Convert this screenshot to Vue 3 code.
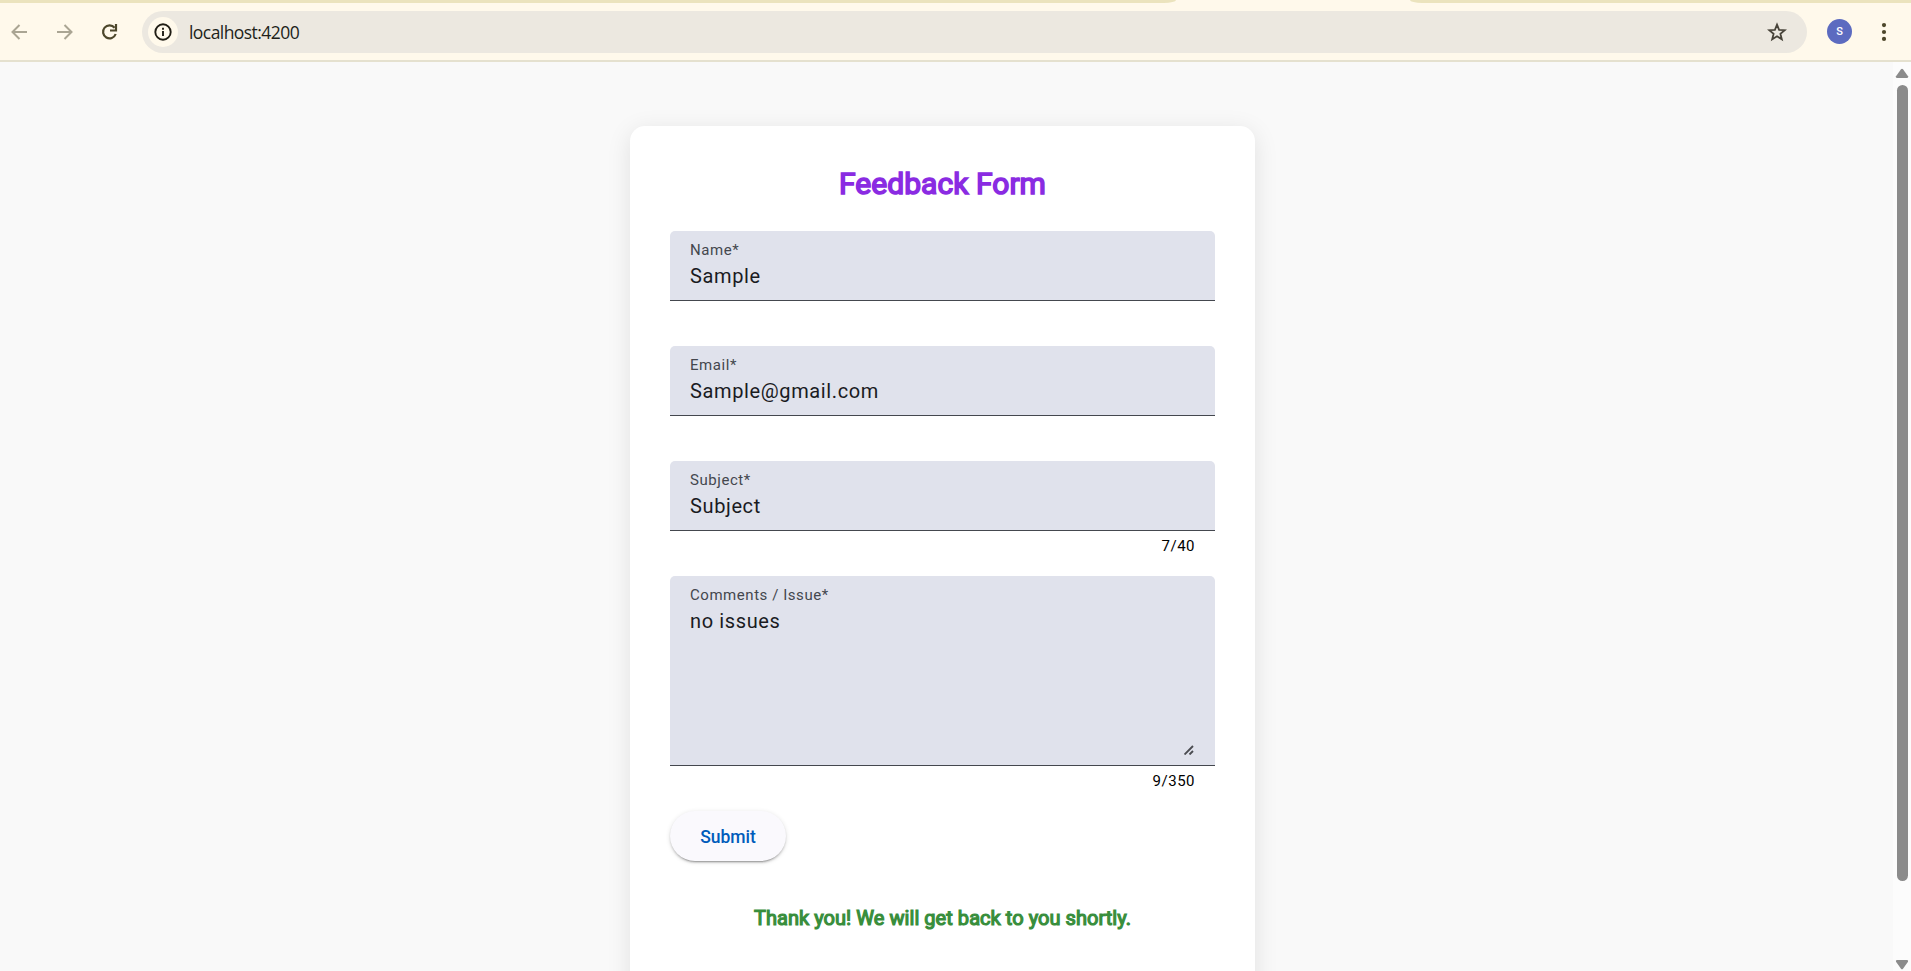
<script setup>
const fields = [
  { id: 'name', label: 'Name*', value: 'Sample', counter: '' },
  { id: 'email', label: 'Email*', value: 'Sample@gmail.com', counter: '' },
  { id: 'subject', label: 'Subject*', value: 'Subject', counter: '7/40' },
  { id: 'comments', label: 'Comments / Issue*', value: 'no issues', counter: '9/350', multiline: true },
]
</script>

<template>
  <div class="window">
    <header class="browser">
      <div class="tab-strip">
        <span class="strip-left"></span>
        <span class="strip-right"></span>
      </div>
      <div class="toolbar">
        <div class="nav">
          <svg width="18" height="18" viewBox="0 0 18 18" class="dim"><path d="M16 9H2M8.500 2L1.500 9l7 7" /></svg>
          <svg width="18" height="18" viewBox="0 0 18 18" class="dim"><path d="M1 9h14M8.500 2l7 7-7 7" /></svg>
          <svg width="18" height="18" viewBox="0 0 18 18" class="reload"><path d="M13.600 4.700A6.500 6.500 0 1 0 14.700 11" /><path d="M15 1v6.500H9" /></svg>
        </div>
        <div class="address">
          <span class="info">
            <svg width="18" height="18" viewBox="0 0 18 18"><circle cx="9" cy="9" r="7.700" /><path d="M9 8v5M9 4.700v2" /></svg>
          </span>
          <span class="url">localhost:4200</span>
          <svg class="star" width="20" height="20" viewBox="0 0 20 20"><path d="M10 2.600l2.100 5.200 5.600.4-4.300 3.600 1.400 5.500-4.800-3-4.800 3 1.400-5.500-4.300-3.600 5.600-.4z" /></svg>
        </div>
        <span class="avatar">S</span>
        <svg class="dots" width="6" height="20" viewBox="0 0 6 20"><circle cx="3" cy="3.100" r="2.100" /><circle cx="3" cy="10" r="2.100" /><circle cx="3" cy="16.900" r="2.100" /></svg>
      </div>
    </header>
    <div class="viewport">
      <main class="page">
        <section class="card">
          <h2>Feedback Form</h2>
          <div v-for="f in fields" :key="f.id" class="field">
            <div class="box" :class="{ tall: f.multiline }">
              <span class="label">{{ f.label }}</span>
              <span class="value">{{ f.value }}</span>
              <svg v-if="f.multiline" class="grip" width="10" height="10" viewBox="0 0 10 10"><path d="M.5 9.500L9 1M5.500 9.500L9 6" /></svg>
            </div>
            <div class="counter">{{ f.counter }}</div>
          </div>
          <button type="button">Submit</button>
          <p class="thanks">Thank you! We will get back to you shortly.</p>
        </section>
      </main>
      <aside class="scrollbar">
        <svg width="14" height="11" viewBox="0 0 14 11"><path d="M6 1.200q1-1 2 0l5 7q.7 1.800-1 1.800H2Q.3 10 1 8.200z" /></svg>
        <span class="thumb"></span>
        <svg class="down" width="14" height="11" viewBox="0 0 14 11"><path d="M6 9.800q1 1 2 0l5-7q.7-1.800-1-1.800H2Q.3 1 1 2.800z" /></svg>
      </aside>
    </div>
  </div>
</template>

<style>
body { margin: 0; overflow: hidden; }
</style>

<style scoped>
* { box-sizing: border-box; }
.window { height: 971px; display: flex; flex-direction: column; overflow: hidden; font-family: Roboto, sans-serif; }
.browser { height: 62px; flex: none; background: #fff9eb; border-bottom: 2px solid #e5e1cf; }
.tab-strip { height: 3px; display: flex; justify-content: space-between; }
.strip-left { width: 1176px; background: #ebe3bd; border-bottom-right-radius: 12px 3px; }
.strip-right { width: 501px; background: #ebe3bd; border-bottom-left-radius: 12px 3px; }
.toolbar { height: 57px; display: flex; align-items: center; padding: 0 23px 0 11px; }
.nav { display: flex; gap: 27px; width: 131px; }
.nav svg { fill: none; stroke-width: 2; stroke: #4d472b; }
.nav .dim { stroke: #aaa593; }
.nav .reload { stroke-width: 2.200; }
.address { width: 1665px; height: 42px; border-radius: 21px; background: #ece8e0; display: flex; align-items: center; padding: 0 20px 0 6px; }
.info { width: 30px; height: 30px; border-radius: 50%; background: #fff9eb; display: flex; align-items: center; justify-content: center; }
.info svg { fill: none; stroke: #201d14; stroke-width: 1.900; }
.url { flex: 1; margin-left: 11px; font: 17.500px/24px "Open Sans", sans-serif; letter-spacing: -.56px; color: #211f1a; }
.star { fill: none; stroke: #48443a; stroke-width: 1.800; }
.avatar { width: 25px; height: 25px; margin-left: 20px; border-radius: 50%; background: #5c6bc0; color: #fff; font: 500 11px/25px Roboto, sans-serif; text-align: center; }
.dots { margin-left: 29px; fill: #4d472b; flex: none; }
.viewport { flex: 1; min-height: 0; display: flex; background: #f9f9f9; }
.page { flex: 1; padding: 64px 8px 0 0; overflow: hidden; }
.card { width: 625px; height: 900px; margin: 0 auto; padding: 40px; background: #fff; border-radius: 15px; box-shadow: 0 5px 25px rgba(0, 0, 0, .1); }
h2 { margin: 0 0 30px; height: 35px; font-size: 30px; line-height: 35px; font-weight: 400; letter-spacing: .04px; -webkit-text-stroke: 1.600px #8a2be2; text-align: center; color: #8a2be2; }
.box { height: 70px; padding: 10px 20px 0; background: #e0e2ec; border-bottom: 1px solid #44474e; border-radius: 5px 5px 0 0; display: flex; flex-direction: column; }
.box.tall { height: 190px; }
.label { font-size: 15px; line-height: 18px; letter-spacing: .55px; color: #44474e; }
.value { font-size: 20px; line-height: 30px; letter-spacing: .62px; color: #1a1b1f; margin-top: 2px; }
.grip { margin: auto 1px 10px auto; fill: none; stroke: #4b4c51; stroke-width: 1.900; }
.counter { height: 45px; padding: 5px 20px 0; font-size: 15px; line-height: 20px; letter-spacing: .5px; text-align: right; color: #000; }
button { display: block; width: 116px; height: 50px; border: 0; border-radius: 25px; background: #faf9fd; box-shadow: 0 3px 1px -2px rgba(0, 0, 0, .2), 0 2px 2px rgba(0, 0, 0, .14), 0 1px 5px rgba(0, 0, 0, .12); color: #005cbb; font: 500 17.500px/25px Roboto, sans-serif; padding: 2px 0 0; }
.thanks { margin: 45px 0 0; font-size: 20px; line-height: 24px; font-weight: 400; letter-spacing: .05px; -webkit-text-stroke: 1.200px #388e3c; text-align: center; color: #388e3c; white-space: nowrap; }
.scrollbar { width: 18px; background: #fcfcfc; display: flex; flex-direction: column; align-items: center; padding: 6px 0 1px 0; }
.scrollbar svg { fill: #8b8b8b; }
.thumb { width: 11px; height: 796px; margin-top: 6px; border-radius: 6px; background: #8b8b8b; }
.down { margin-top: auto; }
</style>
